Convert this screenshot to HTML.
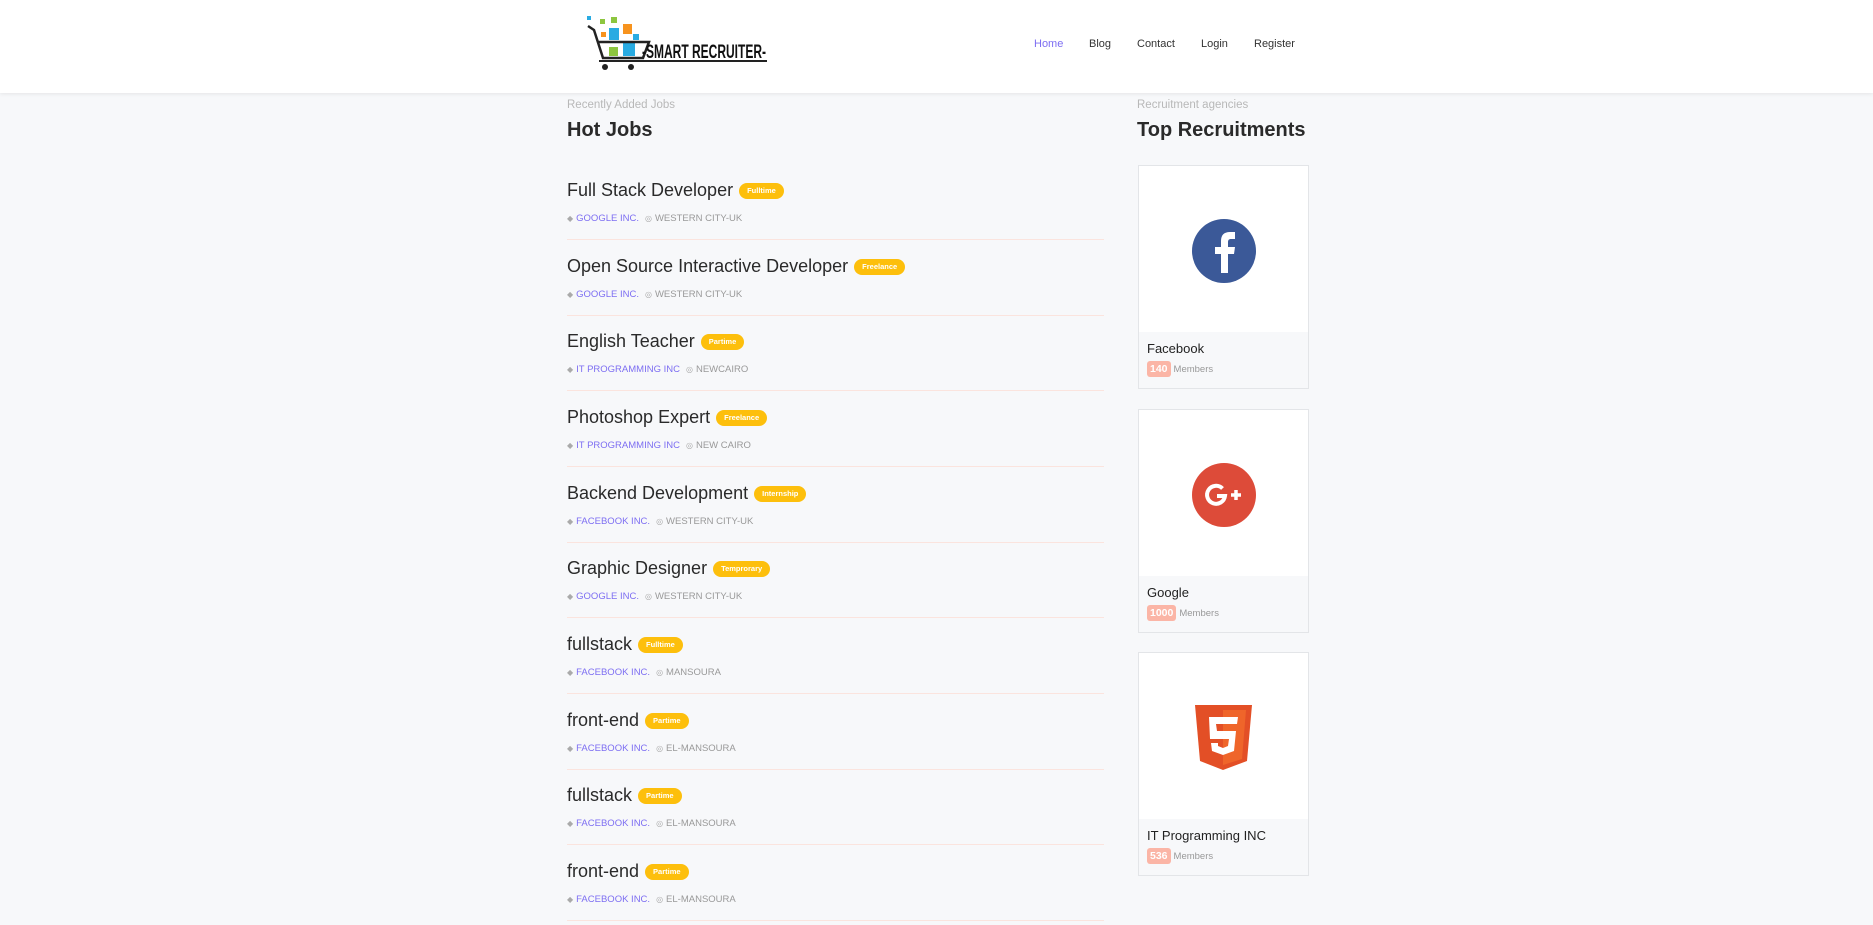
<!DOCTYPE html>
<html><head><meta charset="utf-8"><style>
*{margin:0;padding:0;box-sizing:border-box}
body{width:1873px;height:925px;background:#f7f8fa;font-family:"Liberation Sans",sans-serif;position:relative;overflow:hidden;color:#222}
.hdr{position:absolute;left:0;top:0;width:1873px;height:93px;background:#fff;box-shadow:0 1px 4px rgba(0,0,0,.08)}
.nav{position:absolute;top:38px;font-size:11px;color:#333}
.a{position:absolute}
.job{position:absolute;left:567px;width:537px;height:76px;border-bottom:1px solid #fbe4de}
.t{position:absolute;left:0;top:16px;font-size:18px;color:#2a2a2a;white-space:nowrap}
.b{display:inline-block;vertical-align:3px;margin-left:6px;background:#fdbf0c;color:#fff;font-size:7.5px;font-weight:bold;height:16px;line-height:16px;padding:0 8px;border-radius:8px}
.m{position:absolute;left:0;top:49px;font-size:9.5px;color:#999;white-space:nowrap}
.m .c{color:#7d6ef2;margin-right:6px}
.m i{font-style:normal;color:#aaa;font-size:8px;margin-right:3px}
.card{position:absolute;left:1138px;width:171px;height:224px;border:1px solid #e3e5e8;background:#fff}
.card .ft{position:absolute;left:0;bottom:0;width:100%;height:56px;background:#f7f8fa}
.card .nm{position:absolute;left:8px;top:9px;font-size:13px;color:#222}
.card .mb{position:absolute;left:8px;top:29px;font-size:9.5px;color:#999}
.card .mb span{display:inline-block;background:#fbb5a6;color:#fff;font-weight:bold;font-size:10.5px;padding:0 3px;border-radius:3px;height:16px;line-height:16px;margin-right:3px}
</style></head><body>
<div class="hdr">
<svg class="a" style="left:585px;top:14px" width="182" height="58" viewBox="0 0 182 58">
<rect x="2" y="2" width="4" height="4" fill="#29abe2"/><rect x="15" y="5" width="5" height="5" fill="#8dc63f"/><rect x="26" y="3" width="6" height="6" fill="#8dc63f"/>
<rect x="16" y="18" width="5" height="5" fill="#f7931e"/><rect x="24" y="14" width="10" height="12" fill="#29abe2"/><rect x="38" y="10" width="9" height="10" fill="#f7931e"/><rect x="48" y="20" width="6" height="6" fill="#29abe2"/>
<rect x="24" y="33" width="9" height="9" fill="#8dc63f"/><rect x="38" y="28" width="12" height="14" fill="#29abe2"/>
<path d="M3 12 L9 16 L18 44 L58 44 L64 28 L12 28" fill="none" stroke="#222" stroke-width="2.5"/>
<path d="M14 47 H182" stroke="#222" stroke-width="2"/>
<circle cx="20" cy="53" r="3" fill="#222"/><circle cx="46" cy="53" r="3" fill="#222"/>
<text x="57" y="44" font-family="Liberation Sans Narrow,Liberation Sans,sans-serif" font-weight="bold" font-size="19" fill="#111" textLength="124" lengthAdjust="spacingAndGlyphs">-SMART RECRUITER-</text>
</svg>
<div class="nav" style="left:1034px;color:#7d6ef2">Home</div>
<div class="nav" style="left:1089px">Blog</div>
<div class="nav" style="left:1137px">Contact</div>
<div class="nav" style="left:1201px">Login</div>
<div class="nav" style="left:1254px">Register</div>
</div>
<div class="a" style="left:567px;top:99px;font-size:11.5px;color:#b8b8b8">Recently Added Jobs</div>
<div class="a" style="left:567px;top:119px;font-size:20px;font-weight:bold;color:#2a2a2a">Hot Jobs</div>
<div class="a" style="left:1137px;top:99px;font-size:11.5px;color:#b8b8b8">Recruitment agencies</div>
<div class="a" style="left:1137px;top:119px;font-size:20px;font-weight:bold;color:#2a2a2a">Top Recruitments</div>

<div class="job" style="top:164px"><div class="t">Full Stack Developer<span class="b">Fulltime</span></div><div class="m"><i>◆</i><span class="c">GOOGLE INC.</span><i>◎</i>WESTERN CITY-UK</div></div>
<div class="job" style="top:240px"><div class="t">Open Source Interactive Developer<span class="b">Freelance</span></div><div class="m"><i>◆</i><span class="c">GOOGLE INC.</span><i>◎</i>WESTERN CITY-UK</div></div>
<div class="job" style="top:315px"><div class="t">English Teacher<span class="b">Partime</span></div><div class="m"><i>◆</i><span class="c">IT PROGRAMMING INC</span><i>◎</i>NEWCAIRO</div></div>
<div class="job" style="top:391px"><div class="t">Photoshop Expert<span class="b">Freelance</span></div><div class="m"><i>◆</i><span class="c">IT PROGRAMMING INC</span><i>◎</i>NEW CAIRO</div></div>
<div class="job" style="top:467px"><div class="t">Backend Development<span class="b">Internship</span></div><div class="m"><i>◆</i><span class="c">FACEBOOK INC.</span><i>◎</i>WESTERN CITY-UK</div></div>
<div class="job" style="top:542px"><div class="t">Graphic Designer<span class="b">Temprorary</span></div><div class="m"><i>◆</i><span class="c">GOOGLE INC.</span><i>◎</i>WESTERN CITY-UK</div></div>
<div class="job" style="top:618px"><div class="t">fullstack<span class="b">Fulltime</span></div><div class="m"><i>◆</i><span class="c">FACEBOOK INC.</span><i>◎</i>MANSOURA</div></div>
<div class="job" style="top:694px"><div class="t">front-end<span class="b">Partime</span></div><div class="m"><i>◆</i><span class="c">FACEBOOK INC.</span><i>◎</i>EL-MANSOURA</div></div>
<div class="job" style="top:769px"><div class="t">fullstack<span class="b">Partime</span></div><div class="m"><i>◆</i><span class="c">FACEBOOK INC.</span><i>◎</i>EL-MANSOURA</div></div>
<div class="job" style="top:845px"><div class="t">front-end<span class="b">Partime</span></div><div class="m"><i>◆</i><span class="c">FACEBOOK INC.</span><i>◎</i>EL-MANSOURA</div></div>

<div class="card" style="top:165px">
<svg class="a" style="left:53px;top:53px" width="64" height="64" viewBox="0 0 64 64"><circle cx="32" cy="32" r="32" fill="#3b5998"/><path d="M29 54V35h-6v-7h6v-6c0-6 3-9 9-9h5v7h-4c-2 0-3 1-3 3v5h7l-1 7h-6v19z" fill="#fff"/></svg>
<div class="ft"><div class="nm">Facebook</div><div class="mb"><span>140</span>Members</div></div></div>
<div class="card" style="top:409px">
<svg class="a" style="left:53px;top:53px" width="64" height="64" viewBox="0 0 64 64"><circle cx="32" cy="32" r="32" fill="#dd4b39"/><path d="M30.5 25.5 A9 9 0 1 0 33 33 H25" fill="none" stroke="#fff" stroke-width="4"/><path d="M39 32h10M44 27v10" stroke="#fff" stroke-width="3.5"/></svg>
<div class="ft"><div class="nm">Google</div><div class="mb"><span>1000</span>Members</div></div></div>
<div class="card" style="top:652px">
<svg class="a" style="left:56px;top:52px" width="57" height="65" viewBox="0 0 57 65"><path d="M0 0h57l-5 56-24 9-23-9z" fill="#e34f26"/><path d="M28 5v55l19-6 4-49z" fill="#ef652a"/><path d="M14 12h29l-1 7H21l1 7h19l-2 20-11 4-11-4-1-8h7l0 3 5 2 5-2 1-7H15z" fill="#fff"/></svg>
<div class="ft"><div class="nm">IT Programming INC</div><div class="mb"><span>536</span>Members</div></div></div>
</body></html>
